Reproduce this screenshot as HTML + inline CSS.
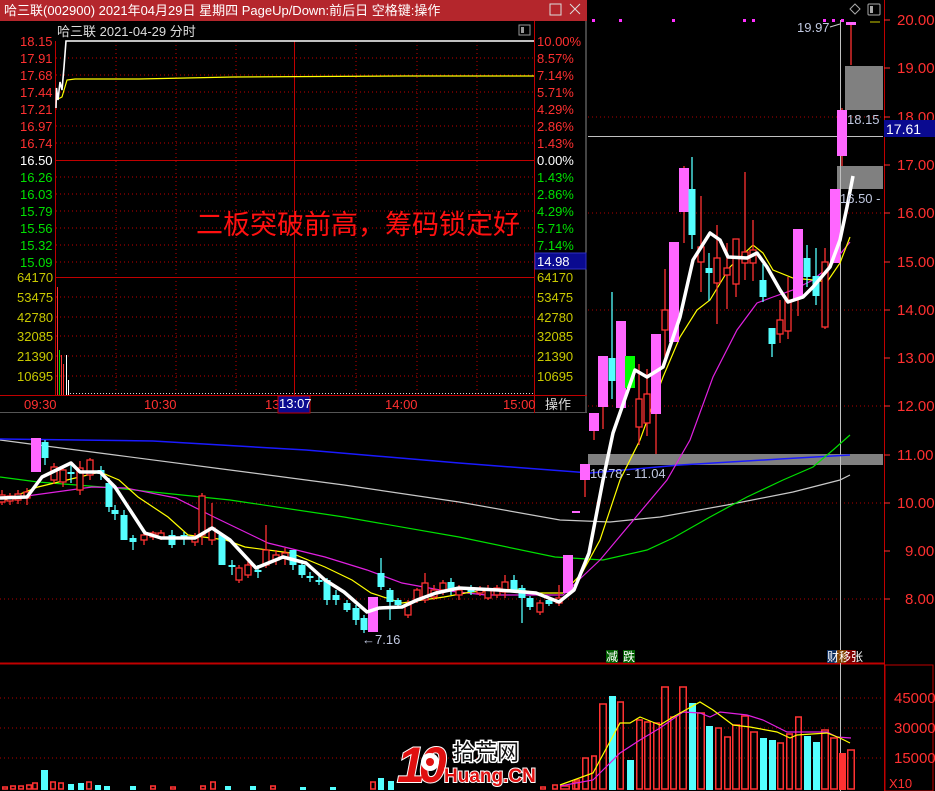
<!DOCTYPE html>
<html><head><meta charset="utf-8">
<style>
html,body{margin:0;padding:0;background:#000;width:935px;height:791px;overflow:hidden}
svg{display:block;font-family:"Liberation Sans","Noto Sans CJK SC",sans-serif}
</style></head><body>
<svg id="s" width="935" height="791" viewBox="0 0 935 791" xmlns="http://www.w3.org/2000/svg">
<rect width="935" height="791" fill="#000"/>
<!-- main grid -->
<g stroke="#b00000" stroke-width="1" stroke-dasharray="1,3">
<line x1="0" y1="117" x2="883" y2="117"/><line x1="0" y1="213" x2="883" y2="213"/>
<line x1="0" y1="310" x2="883" y2="310"/><line x1="0" y1="406" x2="883" y2="406"/>
<line x1="0" y1="503" x2="883" y2="503"/><line x1="0" y1="599" x2="883" y2="599"/>
<line x1="0" y1="698" x2="883" y2="698"/><line x1="0" y1="728" x2="883" y2="728"/>
<line x1="0" y1="758" x2="883" y2="758"/>
</g>
<line x1="0" y1="663.5" x2="884" y2="663.5" stroke="#c00000" stroke-width="2"/>
<line x1="884.5" y1="0" x2="884.5" y2="791" stroke="#c00000"/>
<rect x="885" y="665" width="48" height="126" fill="none" stroke="#c00000"/>
<!-- gray bands -->
<rect x="588" y="454" width="295" height="11" fill="#808080"/>
<rect x="845" y="66" width="38" height="44" fill="#808080"/>
<rect x="837" y="166" width="46" height="23" fill="#808080"/>
<line x1="588" y1="136.5" x2="883" y2="136.5" stroke="#c0c0c0"/>
<line x1="840.5" y1="20" x2="840.5" y2="791" stroke="#c0c0c0"/>
<!-- MAs -->
<g fill="none">
<polyline stroke="#c8c8c8" stroke-width="1.2" points="0,440 38,445 115,455 230,470 344,485 459,502 560,520 610,522 660,517 727,505 793,492 840,480 850,475"/>
<polyline stroke="#1a1aff" stroke-width="1.5" points="0,439 153,441 306,450 459,463 590,473 680,465 780,459 850,455"/>
<polyline stroke="#00e000" stroke-width="1.2" points="0,477 38,482 115,488 230,500 344,517 459,537 555,557 603,560 647,550 673,538 710,517 747,497 783,480 813,467 833,450 850,435"/>
<polyline stroke="#e020e0" stroke-width="1.2" points="0,500 34,495 92,487 126,488 176,498 214,517 268,543 325,557 367,570 402,583 440,590 486,595 536,595 563,595 582,577 600,560 667,480 690,440 713,377 737,330 757,303 773,297 793,290 813,280 833,263 850,242"/>
<polyline stroke="#ffff00" stroke-width="1.2" points="0,502 38,487 100,472 119,480 138,497 168,517 188,535 226,540 245,547 291,553 325,567 352,580 371,593 402,603 444,597 471,592 517,589 536,593 563,593 582,573 600,540 620,480 640,440 663,377 680,337 697,310 710,300 730,267 753,245 763,253 773,270 793,278 813,280 827,282 840,263 850,237"/>
</g>
<g id="candles"></g>
<polyline fill="none" stroke="#fff" stroke-width="3.5" stroke-linejoin="round" points="0,498 27,497 42,477 71,463 80,472 100,472 115,487 130,510 145,533 161,538 195,538 212,528 230,540 256,568 283,557 306,563 325,580 344,592 367,612 379,608 402,607 417,600 436,593 459,588 498,590 536,593 559,602 574,590 589,553 603,480 613,433 635,370 647,377 663,367 680,317 693,260 710,233 720,240 728,257 747,258 757,253 767,267 780,290 788,302 803,297 813,287 830,267 840,240 847,207 853,176"/>
<rect x="572" y="511" width="8" height="2" fill="#ff66ff"/>
<!-- volume -->
<g id="vol"></g>
<g fill="none" stroke-width="1.2">
<polyline stroke="#e020e0" points="560,786 593,780 620,753 640,740 660,728 683,712 700,713 710,717 720,712 747,715 763,720 787,732 797,732 827,732 837,737 851,738"/>
<polyline stroke="#ffff00" points="560,785 593,773 620,723 630,723 640,717 660,725 673,717 700,702 713,710 733,725 750,727 777,732 790,738 797,735 827,733 840,738 850,743"/>
</g>
<!-- labels -->
<g fill="#ff3030" font-size="15">
<text x="897" y="25">20.00</text><text x="897" y="73">19.00</text><text x="897" y="122">18.00</text>
<text x="897" y="170">17.00</text><text x="897" y="218">16.00</text><text x="897" y="267">15.00</text>
<text x="897" y="315">14.00</text><text x="897" y="363">13.00</text><text x="897" y="411">12.00</text>
<text x="897" y="460">11.00</text><text x="897" y="508">10.00</text><text x="905" y="556">9.00</text>
<text x="905" y="604">8.00</text>
<text x="894" y="703">45000</text><text x="894" y="733">30000</text><text x="894" y="763">15000</text>
<text x="889" y="788" font-size="13">X10</text>
</g>
<g stroke="#ff3030"><line x1="884" y1="20" x2="890" y2="20"/><line x1="884" y1="68" x2="890" y2="68"/><line x1="884" y1="117" x2="890" y2="117"/><line x1="884" y1="165" x2="890" y2="165"/><line x1="884" y1="213" x2="890" y2="213"/><line x1="884" y1="262" x2="890" y2="262"/><line x1="884" y1="310" x2="890" y2="310"/><line x1="884" y1="358" x2="890" y2="358"/><line x1="884" y1="406" x2="890" y2="406"/><line x1="884" y1="455" x2="890" y2="455"/><line x1="884" y1="503" x2="890" y2="503"/><line x1="884" y1="551" x2="890" y2="551"/><line x1="884" y1="599" x2="890" y2="599"/></g>
<rect x="884" y="120" width="51" height="17" fill="#0a0a90"/>
<text x="886" y="134" fill="#fff" font-size="14">17.61</text>
<g fill="#c0c8e0" font-size="13">
<text x="797" y="32">19.97</text><line x1="830" y1="27" x2="840" y2="24" stroke="#ccc"/>
<text x="847" y="124">18.15</text><text x="840" y="203">16.50 -</text>
<text x="590" y="478">10.78 - 11.04</text><text x="362" y="644">←7.16</text>
</g>
<line x1="870" y1="22" x2="880" y2="22" stroke="#cc0"/>
<g fill="#ff30ff"><rect x="592" y="19" width="3" height="3"/><rect x="619" y="19" width="3" height="3"/><rect x="672" y="19" width="3" height="3"/><rect x="743" y="19" width="3" height="3"/><rect x="752" y="19" width="3" height="3"/><rect x="823" y="19" width="3" height="3"/><rect x="832" y="19" width="3" height="3"/><rect x="841" y="19" width="3" height="3"/></g>
<path d="M855 4 l5 5 l-5 5 l-5 -5z" fill="none" stroke="#aaa"/>
<rect x="868" y="4" width="12" height="11" fill="none" stroke="#aaa" rx="1"/><rect x="870" y="6" width="3" height="7" fill="#aaa"/>
<rect x="606" y="650" width="12" height="13" fill="#006000"/><text x="606" y="661" fill="#fff" font-size="12">减</text>
<rect x="623" y="650" width="12" height="13" fill="#006000"/><text x="623" y="661" fill="#fff" font-size="12">跌</text>
<rect x="827" y="650" width="10" height="13" fill="#103060"/><rect x="837" y="650" width="9" height="13" fill="#804000"/><rect x="846" y="650" width="10" height="13" fill="#800000"/>
<text x="827" y="661" fill="#fff" font-size="12">财移张</text>
<!-- logo -->
<g font-weight="bold">
<text x="397" y="782" font-size="50" fill="#e01010" stroke="#fff" stroke-width="2" paint-order="stroke" font-style="italic" letter-spacing="-6">10</text>
<circle cx="430" cy="762" r="9" fill="#fff"/><circle cx="430" cy="762" r="4" fill="#e01010"/>
<text x="453" y="760" font-size="22" fill="#111" stroke="#fff" stroke-width="3" paint-order="stroke" font-weight="normal">拾荒网</text>
<text x="444" y="782" font-size="19" fill="#e01010" stroke="#fff" stroke-width="2" paint-order="stroke">Huang.CN</text>
</g>
<!-- popup -->
<rect x="0" y="0" width="587" height="413" fill="#000"/>
<rect x="0" y="0" width="587" height="21" fill="#b4262c"/>
<text x="4" y="15" fill="#fff" font-size="13">哈三联(002900) 2021年04月29日 星期四 PageUp/Down:前后日 空格键:操作</text>
<rect x="550" y="4" width="11" height="11" fill="none" stroke="#ddd"/>
<path d="M570 4 l10 10 M580 4 l-10 10" stroke="#ddd"/>
<line x1="586" y1="21" x2="586" y2="413" stroke="#888"/>
<line x1="0" y1="412.5" x2="587" y2="412.5" stroke="#555"/>
<text x="57" y="36" fill="#ddd" font-size="13">哈三联  2021-04-29 分时</text>
<rect x="519" y="25" width="11" height="10" fill="none" stroke="#999"/><rect x="521" y="27" width="3" height="6" fill="#999"/>
<g stroke="#c00000" stroke-dasharray="1,3">
<line x1="56" y1="58" x2="534" y2="58"/><line x1="56" y1="75" x2="534" y2="75"/><line x1="56" y1="92" x2="534" y2="92"/><line x1="56" y1="109" x2="534" y2="109"/><line x1="56" y1="126" x2="534" y2="126"/><line x1="56" y1="143" x2="534" y2="143"/>
<line x1="56" y1="177" x2="534" y2="177"/><line x1="56" y1="194" x2="534" y2="194"/><line x1="56" y1="211" x2="534" y2="211"/><line x1="56" y1="228" x2="534" y2="228"/><line x1="56" y1="245" x2="534" y2="245"/><line x1="56" y1="262" x2="534" y2="262"/>
<line x1="56" y1="297" x2="534" y2="297"/><line x1="56" y1="317" x2="534" y2="317"/><line x1="56" y1="336" x2="534" y2="336"/><line x1="56" y1="356" x2="534" y2="356"/><line x1="56" y1="376" x2="534" y2="376"/>
<line x1="116" y1="41" x2="116" y2="396"/><line x1="176" y1="41" x2="176" y2="396"/><line x1="236" y1="41" x2="236" y2="396"/><line x1="356" y1="41" x2="356" y2="396"/><line x1="417" y1="41" x2="417" y2="396"/><line x1="477" y1="41" x2="477" y2="396"/>
</g>
<g stroke="#c00000">
<line x1="56" y1="160.5" x2="534" y2="160.5"/><line x1="56" y1="277.5" x2="534" y2="277.5"/><line x1="0" y1="395.5" x2="587" y2="395.5"/>
<line x1="294.5" y1="41" x2="294.5" y2="396"/><line x1="55.5" y1="41" x2="55.5" y2="396"/><line x1="534.5" y1="21" x2="534.5" y2="413"/>
</g>
<polyline fill="none" stroke="#ffff00" stroke-width="1.2" points="56,100 62,97 67,80 75,79 139,79 233,77 406,76 534,76"/>
<polyline fill="none" stroke="#fff" stroke-width="1.6" points="56,108 56.5,88 58,100 60,82 62,90 64,67 66,41 534,41"/>
<g stroke-width="1">
<line x1="57.5" y1="287" x2="57.5" y2="395" stroke="#ff3030"/><line x1="59.5" y1="350" x2="59.5" y2="395" stroke="#00d000"/>
<line x1="61.5" y1="355" x2="61.5" y2="395" stroke="#ff3030"/><line x1="63.5" y1="364" x2="63.5" y2="395" stroke="#ff3030"/>
<line x1="66.5" y1="355" x2="66.5" y2="395" stroke="#fff"/><line x1="68.5" y1="380" x2="68.5" y2="395" stroke="#fff"/>
<line x1="70" y1="393.5" x2="534" y2="393.5" stroke="#ddd" stroke-dasharray="1,2"/>
</g>
<g font-size="13">
<g fill="#ff3030"><text x="20" y="46">18.15</text><text x="20" y="63">17.91</text><text x="20" y="80">17.68</text><text x="20" y="97">17.44</text><text x="20" y="114">17.21</text><text x="20" y="131">16.97</text><text x="20" y="148">16.74</text>
<text x="537" y="46">10.00%</text><text x="537" y="63">8.57%</text><text x="537" y="80">7.14%</text><text x="537" y="97">5.71%</text><text x="537" y="114">4.29%</text><text x="537" y="131">2.86%</text><text x="537" y="148">1.43%</text></g>
<text x="20" y="165" fill="#fff">16.50</text><text x="537" y="165" fill="#fff">0.00%</text>
<g fill="#00e000"><text x="20" y="182">16.26</text><text x="20" y="199">16.03</text><text x="20" y="216">15.79</text><text x="20" y="233">15.56</text><text x="20" y="250">15.32</text><text x="20" y="267">15.09</text>
<text x="537" y="182">1.43%</text><text x="537" y="199">2.86%</text><text x="537" y="216">4.29%</text><text x="537" y="233">5.71%</text><text x="537" y="250">7.14%</text></g>
<rect x="535" y="253" width="51" height="16" fill="#0a0a90" stroke="#3030c0"/><text x="537" y="266" fill="#fff">14.98</text>
<g fill="#c8c800"><text x="17" y="282">64170</text><text x="17" y="302">53475</text><text x="17" y="322">42780</text><text x="17" y="341">32085</text><text x="17" y="361">21390</text><text x="17" y="381">10695</text>
<text x="537" y="282">64170</text><text x="537" y="302">53475</text><text x="537" y="322">42780</text><text x="537" y="341">32085</text><text x="537" y="361">21390</text><text x="537" y="381">10695</text></g>
<g fill="#ff3030"><text x="24" y="409">09:30</text><text x="144" y="409">10:30</text><text x="265" y="409">13</text><text x="385" y="409">14:00</text><text x="503" y="409">15:00</text></g>
<rect x="278" y="396" width="32" height="17" fill="#0a0a90" stroke="#c00000"/><text x="279" y="408" fill="#fff">13:07</text>
<text x="545" y="409" fill="#ddd">操作</text>
</g>
<text x="196" y="234" fill="#ff1010" font-size="27">二板突破前高，筹码锁定好</text>
</svg>
<script>
var ns="http://www.w3.org/2000/svg";
function el(p,t,a){var e=document.createElementNS(ns,t);for(var k in a)e.setAttribute(k,a[k]);p.appendChild(e);return e;}
var C=[[2,495,502,490,505,'r'],[10,496,501,493,505,'r'],[18,494,500,490,504,'r'],[27,492,498,488,505,'r'],[36,438,472,438,472,'p',10],[45,442,458,440,465,'c'],[54,467,480,463,484,'r'],[63,470,482,466,487,'r'],[71,472,474,465,483,'c'],[80,468,490,461,495,'r'],[90,460,475,458,480,'r'],[101,470,474,466,480,'c'],[109,483,507,478,512,'c'],[115,510,514,505,520,'c'],[124,515,540,510,540,'c'],[133,538,542,535,550,'c'],[144,535,540,533,545,'r'],[153,533,537,531,540,'r'],[161,533,538,530,540,'r'],[172,535,545,530,548,'c'],[184,535,538,532,545,'c'],[195,537,542,533,546,'r'],[202,496,535,493,545,'r'],[212,528,540,503,545,'r'],[222,535,565,533,565,'c'],[232,565,567,560,575,'c'],[239,568,580,565,583,'r'],[248,565,575,560,578,'r'],[258,570,572,565,578,'c'],[266,550,565,525,568,'r'],[276,555,560,550,565,'r'],[285,553,558,548,565,'r'],[293,550,565,550,570,'c'],[302,565,575,560,578,'c'],[310,576,578,572,582,'c'],[319,580,582,575,585,'c'],[327,580,600,578,605,'c'],[336,595,600,590,605,'c'],[347,603,610,600,612,'c'],[356,608,620,605,625,'c'],[364,618,630,615,633,'c'],[373,597,632,597,632,'p',10],[381,573,587,558,590,'c'],[390,590,602,588,620,'c'],[398,600,605,598,608,'c'],[408,605,615,600,618,'r'],[417,590,600,588,603,'r'],[425,583,600,573,603,'r'],[434,590,597,585,600,'r'],[443,583,590,580,595,'r'],[451,582,590,578,595,'c'],[459,590,595,585,600,'r'],[471,587,592,585,595,'c'],[480,590,593,586,596,'r'],[488,590,598,585,600,'r'],[497,588,595,585,598,'r'],[505,582,592,575,598,'r'],[514,580,590,575,592,'c'],[522,588,598,585,623,'c'],[530,598,607,596,610,'c'],[540,603,612,600,615,'r'],[549,600,604,598,606,'c'],[559,598,603,585,606,'r'],[568,555,593,555,593,'p',10],
[585,464,480,464,497,'p',10],[594,413,431,413,440,'p',10],[603,356,407,356,429,'p',10],[612,358,381,292,399,'c'],[621,321,408,321,408,'p',10],[630,356,388,356,388,'g',10],[639,399,427,364,445,'r'],[647,394,423,369,436,'r'],[656,334,414,334,454,'p',10],[665,310,330,269,360,'r'],[674,242,342,242,342,'p',10],[684,168,212,166,243,'p',10],[692,189,235,157,249,'c'],[701,247,262,196,292,'r'],[709,268,273,253,301,'c'],[717,258,283,225,324,'r'],[727,268,275,243,309,'r'],[736,239,284,239,297,'r'],[745,252,263,172,280,'r'],[753,250,263,220,281,'r'],[763,280,297,264,302,'c'],[772,328,344,328,357,'c'],[780,320,334,300,343,'r'],[788,300,331,277,339,'r'],[798,229,299,229,316,'p',10],[807,258,277,245,287,'c'],[816,276,296,248,305,'c'],[825,262,327,248,329,'r'],[835,189,263,189,263,'p',10],[842,110,156,108,166,'p',10],[851,22,25,22,65,'p',10]];
var g=document.getElementById('candles');
var col={r:'#ff3232',p:'#ff3232',c:'#54ffff',g:'#00ff00'};
C.forEach(function(c){var x=c[0],w=c[6]||7,t=c[5];
 el(g,'line',{x1:x,x2:x,y1:c[3],y2:c[4],stroke:col[t],'stroke-width':1.3});
 if(t=='r')el(g,'rect',{x:x-w/2+0.5,y:c[1],width:w-1,height:Math.max(1,c[2]-c[1]),fill:'#000',stroke:'#ff3232','stroke-width':1.3});
 else el(g,'rect',{x:x-w/2,y:c[1],width:w,height:Math.max(2,c[2]-c[1]),fill:t=='p'?'#ff66ff':col[t]});
});
var V=[[560,570,786,'r'],[574,580,780,'r'],[572,579,782,'r'],[582,589,758,'r'],[591,597,756,'r'],[599,607,704,'r'],[609,616,696,'c'],[617,624,702,'r'],[627,634,760,'c'],[636,643,720,'r'],[644,651,722,'r'],[653,660,723,'r'],[661,669,687,'r'],[670,677,717,'r'],[679,687,687,'r'],[689,696,703,'c'],[697,705,713,'r'],[706,713,726,'c'],[715,722,728,'r'],[724,731,737,'r'],[732,740,725,'r'],[741,749,716,'r'],[750,758,732,'r'],[760,767,738,'c'],[769,776,740,'c'],[777,784,743,'r'],[786,793,734,'r'],[795,802,717,'r'],[804,811,736,'c'],[813,820,742,'c'],[821,829,730,'r'],[830,838,738,'r'],[839,846,753,'R'],[847,855,750,'r'],
[2,8,787,'r'],[10,16,786,'r'],[18,24,786,'r'],[26,32,785,'r'],[32,38,783,'r'],[41,48,770,'c'],[50,56,782,'r'],[58,64,783,'r'],[68,74,784,'c'],[78,84,783,'c'],[86,92,782,'r'],[95,101,785,'c'],[104,110,786,'c'],[130,136,786,'c'],[150,156,786,'r'],[170,176,787,'r'],[200,206,786,'r'],[210,216,782,'r'],[225,231,786,'c'],[250,256,786,'c'],[270,276,786,'r'],[300,306,787,'c'],[330,336,787,'c'],[370,376,782,'r'],[378,384,778,'c'],[388,394,781,'c'],[540,546,787,'r'],[552,558,785,'r']];
var vg=document.getElementById('vol');
V.forEach(function(v){var t=v[3];
 if(t=='c')el(vg,'rect',{x:v[0],y:v[2],width:v[1]-v[0],height:790-v[2],fill:'#54ffff'});
 else if(t=='R')el(vg,'rect',{x:v[0],y:v[2],width:v[1]-v[0],height:790-v[2],fill:'#ff3232'});
 else el(vg,'rect',{x:v[0]+0.75,y:v[2],width:v[1]-v[0]-1.5,height:789-v[2],fill:'none',stroke:'#ff3232','stroke-width':1.5});
});
</script>
</body></html>
